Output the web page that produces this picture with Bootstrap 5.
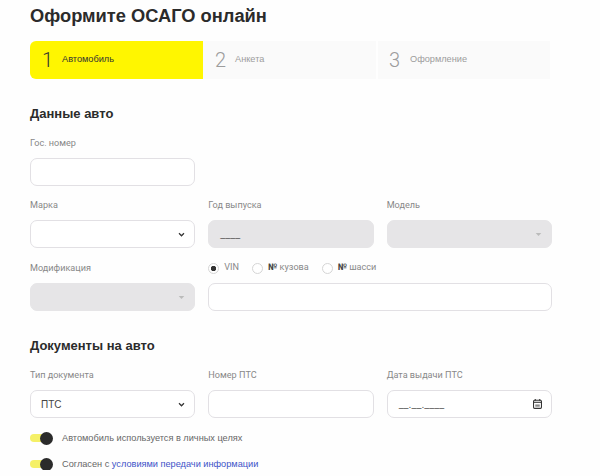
<!DOCTYPE html>
<html lang="ru">
<head>
    <meta charset="UTF-8">
    <meta name="viewport" content="width=device-width, initial-scale=1.0">
    <title>Оформите ОСАГО онлайн</title>
    <link rel="stylesheet" href="https://cdn.jsdelivr.net/npm/bootstrap@5.3.0/dist/css/bootstrap.min.css">
    <style>
        body { background: #fefefe; font-family: "Liberation Sans", Arial, sans-serif; color: #2b2b2b; overflow: hidden; }
        .page-wrap { width: 522px; margin-left: 30px; padding-top: 1px; }
        .page-title { font-size: 18.3px; line-height: 30px; font-weight: 700; margin: 0 0 10px; }
        .steps { height: 38px; }
        .step-item { width: 173px; padding-left: 12px; background: #fafafa; color: #9c9c9c; }
        .step-item:last-child { margin-left: 2px; width: 172px; padding-left: 11px; }
        .step-item:last-child .step-num { width: 21px; }
        .step-item.active { background: #fff600; color: #333; border-radius: 6px 0 0 6px; }
        .step-num { font-family: "Roboto", sans-serif; font-weight: 300; font-size: 20px; width: 20px; }
        .step-name { font-size: 9.2px; }
        .block-title { font-size: 13px; line-height: 18px; font-weight: 700; margin: 0; }
        .form-row { --bs-gutter-x: 13px; --bs-gutter-y: 0; }
        .fld-label { font-family: "Roboto", sans-serif; font-size: 9.1px; line-height: 12px; color: #888; margin: 0 0 9px; display: block; }
        .fld { height: 28px; min-height: 28px; font-size: 10px; border: 1px solid #e2e0e4; border-radius: 7px; padding: 0 10px; color: #444; background-color: #fff; }
        .form-select.fld { background-image: url("data:image/svg+xml,%3csvg xmlns='http://www.w3.org/2000/svg' viewBox='0 0 8 6'%3e%3cpath d='M1 1.5l3 3 3-3' fill='none' stroke='%23333' stroke-width='1.5'/%3e%3c/svg%3e"); background-size: 7px 5px; background-position: right 9px center; padding-right: 24px; }
        .fld-off, .fld-off:disabled { background-color: #e6e5e7; border-color: #e6e5e7; opacity: 1; }
        .form-select.fld-off { background-image: url("data:image/svg+xml,%3csvg xmlns='http://www.w3.org/2000/svg' viewBox='0 0 10 6'%3e%3cpath d='M1 1h8L5 5z' fill='%23bbb'/%3e%3c/svg%3e"); background-size: 7px 5px; background-position: right 9px center; }
        .mask-txt { font-family: "Roboto", sans-serif; font-size: 11px; color: #666; line-height: 28px; padding-left: 11px; }
        .radio-line { height: 12px; margin-bottom: 9px; font-family: "Roboto", sans-serif; font-size: 9.1px; color: #888; }
        .radio-line .form-check-input { width: 11px; height: 11px; margin: 0 5px 0 0; border-color: #d5d5d5; float: none; }
        .radio-line .form-check-input:checked { background-color: #fff; border-color: #d5d5d5; background-image: radial-gradient(circle, #333 0 2.4px, transparent 3px); }
        .radio-line label { margin-right: 13px; }
        .radio-line label b { color: #444; }
        .date-box { position: relative; }
        .date-ico { position: absolute; right: 10px; top: 9px; }
        .tgl { display: inline-block; position: relative; width: 17px; height: 8px; background: #f5f067; border-radius: 4px; margin-right: 15px; flex: none; }
        .tgl::after { content: ""; position: absolute; right: -6px; top: -2.5px; width: 13px; height: 13px; background: #2b2b2b; border-radius: 50%; }
        .tgl-row { font-size: 9.2px; line-height: 12px; color: #666; }
        .tgl-row a { color: #3d53c8; text-decoration: none; }
    </style>
</head>
<body>
    <div class="page-wrap">
        <h1 class="page-title">Оформите ОСАГО онлайн</h1>

        <!-- Шаги -->
        <div class="steps d-flex mb-0">
            <div class="step-item active d-flex align-items-center"><span class="step-num">1</span><span class="step-name">Автомобиль</span></div>
            <div class="step-item d-flex align-items-center"><span class="step-num">2</span><span class="step-name">Анкета</span></div>
            <div class="step-item d-flex align-items-center"><span class="step-num">3</span><span class="step-name">Оформление</span></div>
        </div>

        <!-- Данные авто -->
        <h2 class="block-title" style="margin-top:26px">Данные авто</h2>
        <label class="fld-label" style="margin-top:14px">Гос. номер</label>
        <div class="row form-row">
            <div class="col-4"><input type="text" class="form-control fld"></div>
        </div>

        <div class="row form-row" style="margin-top:13px">
            <div class="col-4">
                <label class="fld-label">Марка</label>
                <select class="form-select fld"><option></option></select>
            </div>
            <div class="col-4">
                <label class="fld-label">Год выпуска</label>
                <div class="fld fld-off mask-txt">____</div>
            </div>
            <div class="col-4">
                <label class="fld-label">Модель</label>
                <select class="form-select fld fld-off" disabled><option></option></select>
            </div>
        </div>

        <div class="row form-row" style="margin-top:14px">
            <div class="col-4">
                <label class="fld-label">Модификация</label>
                <select class="form-select fld fld-off" disabled><option></option></select>
            </div>
            <div class="col-8">
                <div class="radio-line d-flex align-items-center">
                    <input class="form-check-input" type="radio" name="vin" id="r1" checked><label for="r1">VIN</label>
                    <input class="form-check-input" type="radio" name="vin" id="r2"><label for="r2"><b>№</b> кузова</label>
                    <input class="form-check-input" type="radio" name="vin" id="r3"><label for="r3"><b>№</b> шасси</label>
                </div>
                <input type="text" class="form-control fld">
            </div>
        </div>

        <!-- Документы на авто -->
        <h2 class="block-title" style="margin-top:26px">Документы на авто</h2>
        <div class="row form-row" style="margin-top:14px">
            <div class="col-4">
                <label class="fld-label">Тип документа</label>
                <select class="form-select fld"><option>ПТС</option></select>
            </div>
            <div class="col-4">
                <label class="fld-label">Номер ПТС</label>
                <input type="text" class="form-control fld">
            </div>
            <div class="col-4">
                <label class="fld-label">Дата выдачи ПТС</label>
                <div class="date-box">
                    <div class="fld mask-txt">__.__.____</div>
                    <svg class="date-ico" width="9" height="10" viewBox="0 0 10 11"><path d="M2.5 0v2M7.5 0v2" stroke="#333" stroke-width="1.2"/><rect x=".6" y="1.4" width="8.8" height="9" rx="1.2" fill="none" stroke="#333" stroke-width="1.2"/><path d="M1 3.6h8" stroke="#333" stroke-width="1.2"/><path d="M2.5 6h5v2.5h-5z" fill="#888"/></svg>
                </div>
            </div>
        </div>

        <div class="tgl-row d-flex align-items-center" style="margin-top:14px"><span class="tgl"></span>Автомобиль используется в личных целях</div>
        <div class="tgl-row d-flex align-items-center" style="margin-top:14px"><span class="tgl"></span><span>Согласен с <a href="#">условиями передачи информации</a></span></div>
    </div>

    <script src="https://cdn.jsdelivr.net/npm/bootstrap@5.3.0/dist/js/bootstrap.bundle.min.js"></script>
</body>
</html>
